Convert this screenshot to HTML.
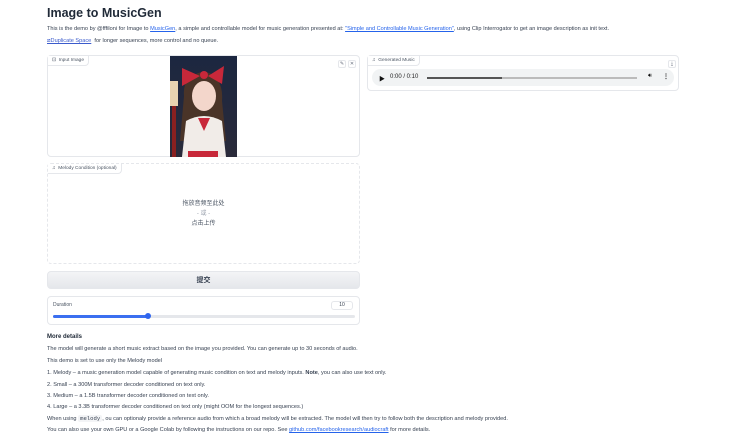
<!DOCTYPE html>
<html><head><meta charset="utf-8"><style>
*{box-sizing:border-box;margin:0;padding:0}
body{width:750px;height:441px;background:#fff;font-family:"Liberation Sans","Noto Sans CJK SC",sans-serif;color:#374151;position:relative;overflow:hidden;font-size:5.6px}
.a{position:absolute}
a{color:#2563eb;text-decoration:underline}
.box{position:absolute;border:1px solid #e5e7eb;border-radius:4px;background:#fff}
.lab{position:absolute;left:0;top:0;border-right:1px solid #e5e7eb;border-bottom:1px solid #e5e7eb;border-radius:0 0 4px 0;padding:2px 4px 2px 4px;font-size:4.8px;color:#4b5563;background:#fff}
.ib{position:absolute;width:8px;height:8px;border:1px solid #e5e7eb;border-radius:2px;font-size:5px;text-align:center;line-height:7px;color:#6b7280;background:#fff}
p.l{position:absolute;left:47px;white-space:nowrap}
</style></head><body>
<div class="a" style="left:47px;top:6px;font-size:12.5px;font-weight:bold;color:#1f2937">Image to MusicGen</div>
<p class="l" style="top:26px">This is the demo by @fffiloni for Image to <a>MusicGen</a>, a simple and controllable model for music generation presented at: <a>"Simple and Controllable Music Generation"</a>, using Clip Interrogator to get an image description as init text.</p>
<p class="l" style="top:38px"><a style="color:#3b5bcc">⧄Duplicate Space</a>&nbsp; for longer sequences, more control and no queue.</p>

<div class="box" style="left:47px;top:55px;width:313px;height:102px">
<div class="lab">⊡&nbsp; Input Image</div>
<div class="ib" style="left:290px;top:4px">✎</div><div class="ib" style="left:300px;top:4px">✕</div>
<svg class="a" style="left:122px;top:0" width="67" height="101" viewBox="0 0 67 101">
<defs><linearGradient id="bg" x1="0" y1="0" x2="0" y2="1"><stop offset="0" stop-color="#1c2740"/><stop offset="1" stop-color="#2a2a3a"/></linearGradient></defs>
<rect width="67" height="101" fill="url(#bg)"/>
<rect x="0" y="25" width="8" height="25" fill="#e8d3b0"/><rect x="2" y="50" width="4" height="51" fill="#8a2020"/>
<path d="M14 40 Q12 20 33 16 Q54 20 52 45 L56 85 L10 85 Z" fill="#4a3428"/>
<ellipse cx="34" cy="40" rx="12" ry="15" fill="#f3d6cb"/>
<path d="M20 30 Q33 12 48 30 L47 22 Q34 10 20 22Z" fill="#4a3428"/>
<path d="M12 12 L30 20 L12 30Z M54 10 L38 20 L52 28Z" fill="#c8283a"/>
<circle cx="34" cy="19" r="4" fill="#c8283a"/>
<path d="M16 65 Q34 55 52 65 L56 101 L12 101Z" fill="#f1ece8"/>
<path d="M28 62 L34 75 L40 62Z" fill="#c8283a"/>
<rect x="18" y="95" width="30" height="6" fill="#c8283a"/>
</svg>
</div>

<div class="box" style="left:47px;top:163px;width:313px;height:101px;border-style:dashed">
<div class="lab">♫&nbsp; Melody Condition (optional)</div>
<div class="a" style="left:0;width:311px;top:35px;text-align:center;font-size:6px;color:#4b5563;line-height:10px">拖放音频至此处<br><span style="color:#9ca3af">- 或 -</span><br>点击上传</div>
</div>

<div class="a" style="left:47px;top:271px;width:313px;height:18px;border-radius:4px;background:linear-gradient(#f3f4f6,#e5e7eb);border:1px solid #e5e7eb;text-align:center;line-height:17px;font-size:7px;font-weight:bold;color:#374151">提交</div>

<div class="box" style="left:47px;top:296px;width:313px;height:29px">
<div class="a" style="left:5px;top:5px;font-size:5px;color:#4b5563">Duration</div>
<div class="a" style="left:283px;top:4px;width:22px;height:9px;border:1px solid #e5e7eb;border-radius:3px;font-size:5px;text-align:center;line-height:7px">10</div>
<div class="a" style="left:5px;top:18px;width:302px;height:3px;border-radius:2px;background:#e5e7eb"></div>
<div class="a" style="left:5px;top:18px;width:95px;height:3px;border-radius:2px;background:#3b6ff0"></div>
<div class="a" style="left:97px;top:16px;width:6px;height:6px;border-radius:50%;background:#2f65ee"></div>
</div>

<div class="box" style="left:367px;top:55px;width:312px;height:36px">
<div class="lab">♫&nbsp; Generated Music</div>
<div class="ib" style="left:300px;top:4px">⤓</div>
<div class="a" style="left:4px;top:13px;width:302px;height:17px;border-radius:9px;background:#f1f3f4"></div>
<div class="a" style="left:11px;top:18px;font-size:6px;color:#111">▶</div>
<div class="a" style="left:22px;top:18px;font-size:6px;color:#222">0:00 / 0:10</div>
<div class="a" style="left:59px;top:21px;width:210px;height:1.5px;background:#bbb"></div>
<div class="a" style="left:59px;top:21px;width:75px;height:1.5px;background:#555"></div>
<div class="a" style="left:280px;top:17px;font-size:6px;color:#111">🔊︎</div>
<div class="a" style="left:295px;top:17px;font-size:6px;color:#111;font-weight:bold">⋮</div>
</div>

<p class="l" style="top:334px;font-weight:bold;color:#1f2937;font-size:6px">More details</p>
<p class="l" style="top:346px">The model will generate a short music extract based on the image you provided. You can generate up to 30 seconds of audio.</p>
<p class="l" style="top:358px">This demo is set to use only the Melody model</p>
<p class="l" style="top:370px">1. Melody – a music generation model capable of generating music condition on text and melody inputs. <b>Note</b>, you can also use text only.</p>
<p class="l" style="top:382px">2. Small – a 300M transformer decoder conditioned on text only.</p>
<p class="l" style="top:393px">3. Medium – a 1.5B transformer decoder conditioned on text only.</p>
<p class="l" style="top:404px">4. Large – a 3.3B transformer decoder conditioned on text only (might OOM for the longest sequences.)</p>
<p class="l" style="top:415px">When using <span style="font-family:'Liberation Mono',monospace;background:#f3f4f6;padding:0 2px;border-radius:2px">melody</span>, ou can optionaly provide a reference audio from which a broad melody will be extracted. The model will then try to follow both the description and melody provided.</p>
<p class="l" style="top:427px">You can also use your own GPU or a Google Colab by following the instructions on our repo. See <a>github.com/facebookresearch/audiocraft</a> for more details.</p>
</body></html>
